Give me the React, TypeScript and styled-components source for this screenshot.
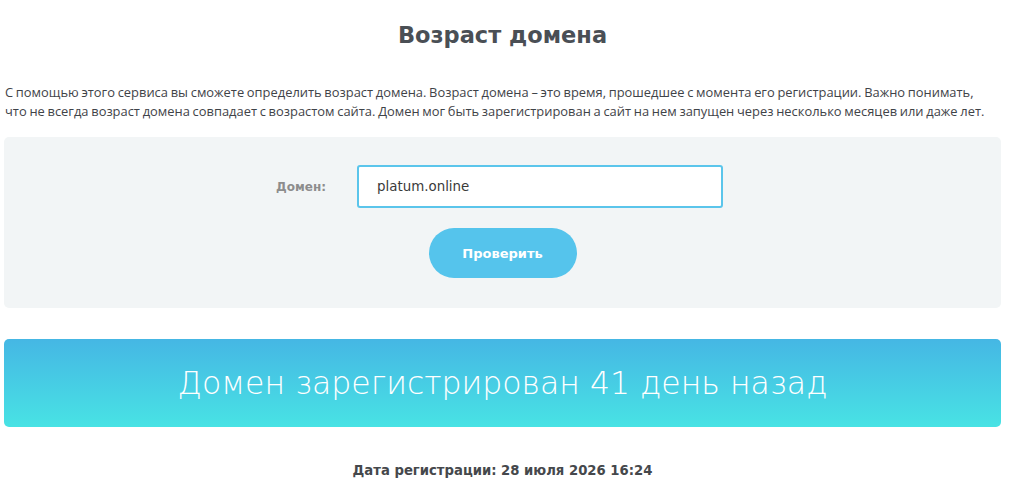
import styled, { createGlobalStyle } from "styled-components";

const GlobalStyle = createGlobalStyle`
  body {
    margin: 0;
    background: #ffffff;
    font-family: "Open Sans", "Noto Sans", sans-serif;
  }
`;

export const PageWrapp = styled.div`
  width: 997px;
  margin-left: 4px;
  padding-top: 21px;
`;

export const PageTitle = styled.h1`
  margin: 0 0 33px;
  text-align: center;
  font-family: "DejaVu Sans", sans-serif;
  font-weight: 700;
  font-size: 22.5px;
  line-height: 29px;
  color: #4a4f55;
`;

export const PageDescription = styled.p`
  margin: 0 0 16px;
  padding: 0 8px 0 1px;
  font-size: 12.9px;
  line-height: 19px;
  word-spacing: -0.6px;
  color: #3f4348;
`;

export const CheckForm = styled.form`
  background: #f2f5f6;
  border-radius: 5px;
  padding: 28px 0 30px;
  display: flex;
  flex-direction: column;
  align-items: center;
  gap: 20px;
`;

export const FormRow = styled.div`
  display: flex;
  align-items: center;
  gap: 31px;
  margin-left: -6px;
`;

export const FormLabel = styled.label`
  font-family: "DejaVu Sans", sans-serif;
  font-weight: 700;
  font-size: 12px;
  color: #8d8d8d;
`;

export const DomainInput = styled.input`
  box-sizing: border-box;
  width: 366px;
  height: 43px;
  border: 2px solid #5bc5eb;
  border-radius: 3px;
  background: #ffffff;
  padding: 0 18px;
  font-family: "DejaVu Sans", sans-serif;
  font-size: 13.4px;
  color: #3a3a3a;
  outline: none;
`;

export const SubmitButton = styled.button`
  width: 148px;
  height: 50px;
  border: none;
  border-radius: 25px;
  background: #55c4ec;
  color: #ffffff;
  font-family: "DejaVu Sans", sans-serif;
  font-weight: 700;
  font-size: 13px;
  cursor: pointer;
`;

export const ResultBanner = styled.div`
  margin-top: 31px;
  height: 88px;
  border-radius: 5px;
  background: linear-gradient(180deg, #45b7e4 0%, #48e3e4 100%);
  display: flex;
  align-items: center;
  justify-content: center;
`;

export const ResultText = styled.span`
  font-family: "DejaVu Sans", sans-serif;
  font-weight: 300;
  font-size: 31.5px;
  color: #ffffff;
`;

export const RegDate = styled.div`
  margin-top: 34px;
  text-align: center;
  font-family: "DejaVu Sans Condensed", "DejaVu Sans", sans-serif;
  font-weight: 700;
  font-size: 14.7px;
  color: #45484c;
`;

export default function App() {
  return (
    <>
      <GlobalStyle />
      <PageWrapp>
        <PageTitle>Возраст домена</PageTitle>
        <PageDescription>
          С помощью этого сервиса вы сможете определить возраст домена. Возраст
          домена – это время, прошедшее с момента его регистрации. Важно
          понимать, что не всегда возраст домена совпадает с возрастом сайта.
          Домен мог быть зарегистрирован а сайт на нем запущен через несколько
          месяцев или даже лет.
        </PageDescription>
        <CheckForm onSubmit={(e) => e.preventDefault()}>
          <FormRow>
            <FormLabel htmlFor="domain">Домен:</FormLabel>
            <DomainInput id="domain" defaultValue="platum.online" />
          </FormRow>
          <SubmitButton type="submit">Проверить</SubmitButton>
        </CheckForm>
        <ResultBanner>
          <ResultText>Домен зарегистрирован 41 день назад</ResultText>
        </ResultBanner>
        <RegDate>Дата регистрации: 28 июля 2026 16:24</RegDate>
      </PageWrapp>
    </>
  );
}
